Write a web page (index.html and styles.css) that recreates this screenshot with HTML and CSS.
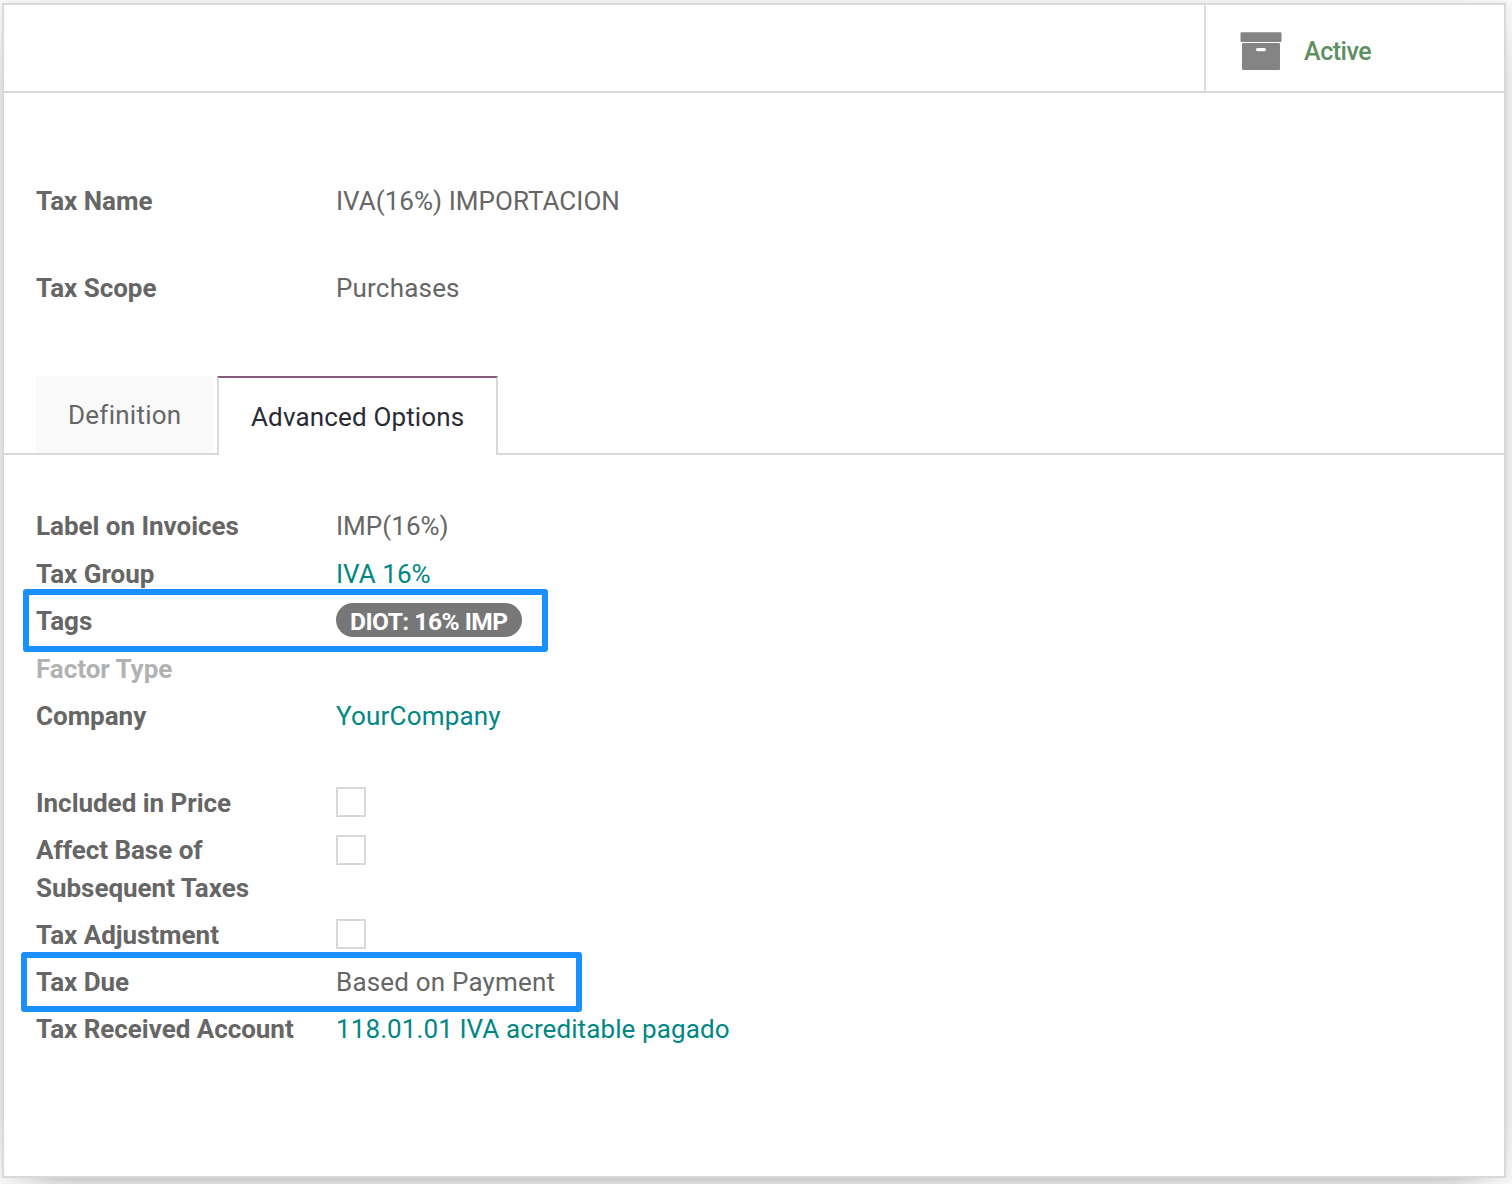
FILE: index.html
```html
<!DOCTYPE html>
<html lang="en">
<head>
<meta charset="utf-8">
<title>Tax</title>
<link rel="stylesheet" href="styles.css">
</head>
<body>
<main class="sheet">
  <header class="button-box">
    <button class="stat-button" type="button">
      <svg class="archive-icon" width="42" height="39" viewBox="0 0 42 39" aria-hidden="true">
        <rect x="0.5" y="0.3" width="41" height="9.7" rx="1.2"/>
        <path fill-rule="evenodd" d="M3 11H39Q40 11 40 12V37Q40 38 39 38H3Q2 38 2 37V12Q2 11 3 11ZM17.6 16Q16 16 16 17.6Q16 19.3 17.6 19.3H24.4Q26 19.3 26 17.6Q26 16 24.4 16Z"/>
      </svg>
      <span>Active</span>
    </button>
  </header>

  <section class="group group-main">
    <div class="field"><span class="label">Tax Name</span><span class="value value-caps">IVA(16%) IMPORTACION</span></div>
    <div class="field"><span class="label">Tax Scope</span><span class="value">Purchases</span></div>
  </section>

  <nav class="tabs">
    <a class="tab">Definition</a>
    <a class="tab tab-active">Advanced Options</a>
  </nav>

  <section class="group group-options">
    <div class="field"><span class="label">Label on Invoices</span><span class="value value-caps">IMP(16%)</span></div>
    <div class="field"><span class="label">Tax Group</span><a class="value value-caps link">IVA 16%</a></div>
    <div class="field marked marked-tags"><span class="label">Tags</span><span class="value"><span class="tag">DIOT: 16% IMP</span></span></div>
    <div class="field"><span class="label label-empty">Factor Type</span></div>
    <div class="field"><span class="label">Company</span><a class="value link">YourCompany</a></div>
  </section>

  <section class="group group-accounting">
    <div class="field"><span class="label">Included in Price</span><span class="checkbox"></span></div>
    <div class="field field-tall"><span class="label">Affect Base of Subsequent Taxes</span><span class="checkbox"></span></div>
    <div class="field"><span class="label">Tax Adjustment</span><span class="checkbox"></span></div>
    <div class="field marked marked-due"><span class="label">Tax Due</span><span class="value">Based on Payment</span></div>
    <div class="field"><span class="label">Tax Received Account</span><a class="value link account">118.01.01 IVA acreditable pagado</a></div>
  </section>
</main>
</body>
</html>
```
FILE: styles.css
```css
*, *::after { box-sizing: border-box; }

body {
  margin: 0;
  height: 1184px;
  padding: 3px 6px 0 2px;
  overflow: hidden;
  background: #f8f8f8;
  color: #666;
  font: 26px/38px Roboto, sans-serif;
}

.sheet {
  height: 1175px;
  border: 2px solid #d9d9d9;
  background: #fff;
  box-shadow: 0 10px 40px -30px #000, 0 0 10px rgba(0, 0, 0, 0.06);
}

.button-box {
  display: flex;
  justify-content: flex-end;
  height: 88px;
  border-bottom: 2px solid #d9d9d9;
}

.stat-button {
  display: flex;
  align-items: center;
  gap: 22px;
  width: 300px;
  padding: 6px 0 0 34px;
  border: 0;
  border-left: 2px solid #dedede;
  background: none;
  color: #5c8f61;
  font: 500 25px/38px Roboto, sans-serif;
  letter-spacing: -0.45px;
}

.stat-button span { margin-top: 2px; }

.archive-icon { fill: #848484; }

.group {
  display: flex;
  flex-direction: column;
  padding-left: 32px;
}

.group-main { gap: 49px; padding-top: 89px; }
.group-options { gap: 9.5px; padding-top: 52px; }
.group-accounting { gap: 9px; padding-top: 49px; }

.field {
  display: grid;
  grid-template-columns: 260px 1fr;
  column-gap: 40px;
}

.label { font-weight: 700; letter-spacing: -0.03px; }
.label-empty { color: #b2b2b2; }
.value { letter-spacing: 0.19px; }
.value-caps { letter-spacing: 0.04px; }
.link { color: #008784; }
.account { letter-spacing: 0.1px; }

.tabs {
  display: flex;
  align-items: flex-start;
  gap: 4px;
  height: 79px;
  margin-top: 69px;
  padding-left: 32px;
  background: linear-gradient(#d9d9d9, #d9d9d9) bottom / 100% 2px no-repeat;
}

.tab {
  width: 177px;
  height: 77px;
  padding: 20px 0 0 32px;
  background: #f9f9f9;
  letter-spacing: 0.25px;
}

.tab-active {
  width: 281px;
  height: 79px;
  border: solid #d9d9d9;
  border-width: 2px 2px 0;
  border-top-color: #875a7b;
  background: #fff;
  color: #2a2a35;
  letter-spacing: 0.15px;
}

.tag {
  display: block;
  width: 186px;
  height: 34px;
  margin-top: 1px;
  padding: 0 0 0 14px;
  border-radius: 17px;
  background: #777;
  color: #fff;
  font-size: 24.5px;
  font-weight: 700;
  line-height: 37px;
  letter-spacing: -0.5px;
}

.checkbox {
  width: 30px;
  height: 30px;
  margin-top: 3px;
  border: 2px solid #d9d9d9;
}

.field-tall .checkbox { margin-top: 4px; }

.marked { position: relative; }

.marked::after {
  content: "";
  position: absolute;
  border: 6px solid #1a8fff;
  border-radius: 3px;
}

.marked-tags::after { left: -13.5px; top: -13.5px; width: 525.5px; height: 63px; }
.marked-due::after { left: -15px; top: -11.5px; width: 560.5px; height: 60px; }
```
